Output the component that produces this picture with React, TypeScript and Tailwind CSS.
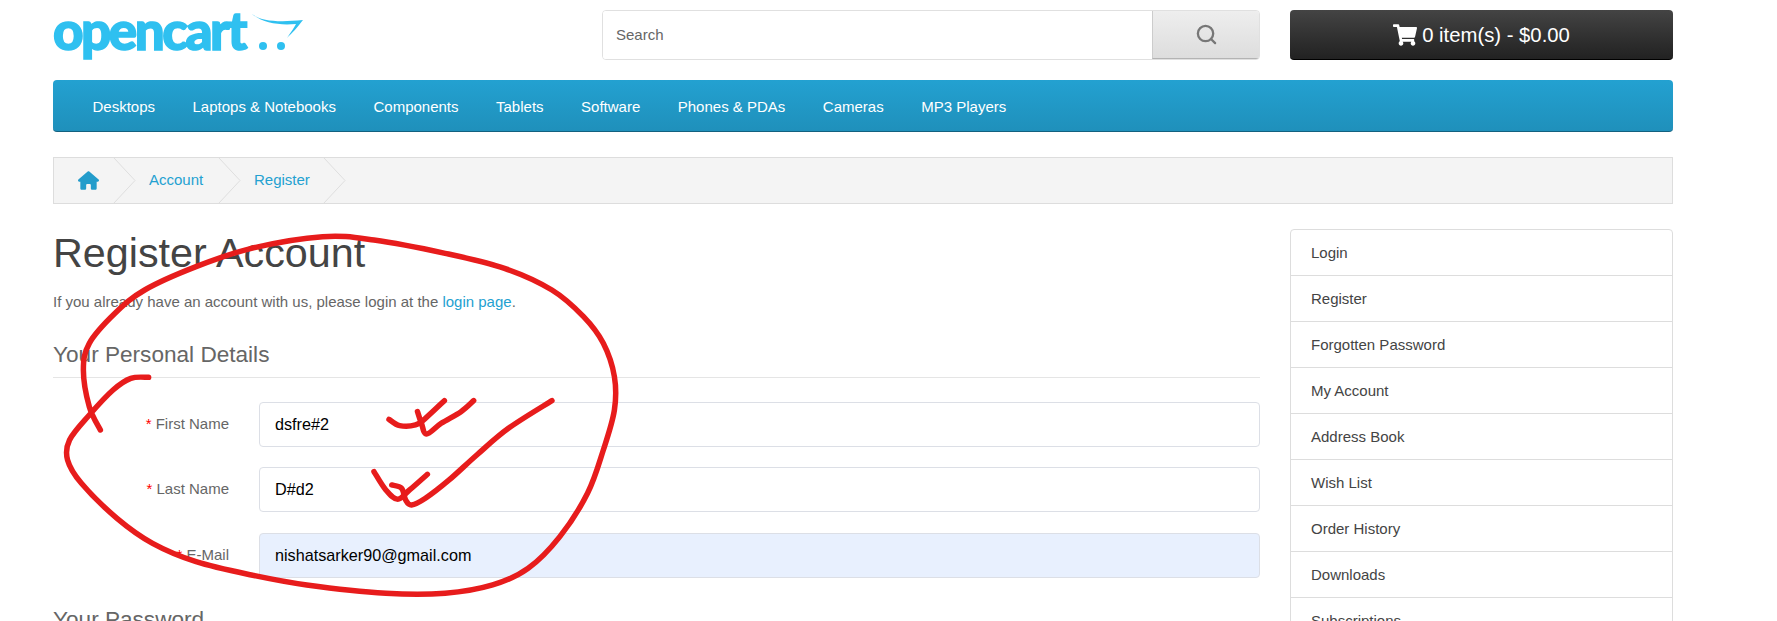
import React from 'react';
import { Search } from 'lucide-react';
import { FaShoppingCart } from 'react-icons/fa';
import { FaHouse } from 'react-icons/fa6';

const navItems = ['Desktops', 'Laptops & Notebooks', 'Components', 'Tablets', 'Software', 'Phones & PDAs', 'Cameras', 'MP3 Players'];
const sideItems = ['Login', 'Register', 'Forgotten Password', 'My Account', 'Address Book', 'Wish List', 'Order History', 'Downloads', 'Subscriptions'];

type Pt = [number, number];

// smooth line through hand-picked points (catmull-rom to bezier)
const smooth = (p: Pt[]) => {
  let d = `M${p[0][0]} ${p[0][1]}`;
  for (let i = 0; i < p.length - 1; i++) {
    const a = p[Math.max(i - 1, 0)];
    const b = p[i];
    const c = p[i + 1];
    const e = p[Math.min(i + 2, p.length - 1)];
    d += ` C${b[0] + (c[0] - a[0]) / 6} ${b[1] + (c[1] - a[1]) / 6} ${c[0] - (e[0] - b[0]) / 6} ${c[1] - (e[1] - b[1]) / 6} ${c[0]} ${c[1]}`;
  }
  return d;
};

const scribbles: Pt[][] = [
  [[178, 660], [150, 590], [135, 480], [150, 400], [215, 310], [290, 240], [420, 170], [560, 115], [740, 80], [870, 90], [1050, 130], [1200, 175], [1320, 240], [1400, 320], [1450, 400], [1478, 500], [1478, 600], [1450, 720], [1410, 850], [1340, 980], [1260, 1075], [1170, 1125], [1050, 1150], [900, 1150], [700, 1125], [560, 1095], [420, 1055], [310, 1000], [220, 925], [130, 820], [95, 750], [100, 690], [150, 615], [210, 540], [255, 505], [300, 502]],
  [[908, 628], [935, 647], [975, 645], [1000, 625], [1048, 572]],
  [[980, 605], [990, 640], [1003, 672], [1040, 640], [1090, 605], [1122, 572]],
  [[870, 785], [900, 840], [930, 868], [960, 840], [1005, 793]],
  [[915, 825], [940, 835], [950, 870], [965, 885], [1000, 865], [1060, 810], [1130, 735], [1210, 655], [1320, 572]],
];

const Logo = () => (
  <div className="relative w-[260px] h-[62px]">
    <span className="absolute left-0 top-[-5px] font-['Lato',sans-serif] font-black text-[53px] leading-[50px] tracking-[-2.5px] text-[#2fc0f0] [-webkit-text-stroke:1.5px_#2fc0f0]">opencart</span>
    <svg className="absolute left-[190px] top-0" width="75" height="50" viewBox="0 0 75 50">
      <path d="M7 2 C14 10 30 13 60 10 C54 18 49 23 44 28 C48 22 51 18 53 14 C35 16 16 12 7 2Z" fill="#2fc0f0" />
      <circle cx="20" cy="36" r="4" fill="#2fc0f0" />
      <circle cx="38" cy="36" r="4" fill="#2fc0f0" />
    </svg>
  </div>
);

const Field = ({ label, value, autofill }: { label: string; value: string; autofill?: boolean }) => (
  <div className="flex items-center h-[45px] mb-[20.5px]">
    <label className="w-[176px] text-right text-[15px] text-[#666]">
      <span className="text-[#f00]">* </span>
      {label}
    </label>
    <div
      className={`ml-[30px] flex-1 h-full flex items-center px-[15px] rounded-[4px] border border-[#dcdfe6] text-[16.2px] text-black ${autofill ? 'bg-[#e8f0fe]' : 'bg-white'}`}
    >
      {value}
    </div>
  </div>
);

export default function App() {
  return (
    <div className="relative h-[621px] overflow-hidden bg-white font-['Liberation_Sans',Arial,sans-serif]">
      <div className="w-[1620px] ml-[53px]">
        {/* header */}
        <header className="flex items-start pt-[10px] h-[80px]">
          <Logo />
          <div className="ml-[289px] flex w-[658px] h-[50px] rounded-[4px] border border-[#e0e0e0] overflow-hidden">
            <div className="flex-1 flex items-center px-[13px] pt-[1px] text-[15px] text-[#666] bg-white">Search</div>
            <div className="w-[107px] flex items-center justify-center border-l border-[#ccc] border-b-[#b3b3b3] border-b bg-linear-to-b from-[#eeeeee] to-[#dddddd] text-[#777]">
              <Search size={23} strokeWidth={2.4} />
            </div>
          </div>
          <div className="ml-[30px] w-[383px] h-[50px] flex items-center justify-center gap-[5px] rounded-[4px] border-b border-black bg-linear-to-b from-[#444444] to-[#222222] text-white text-[20.3px]">
            <FaShoppingCart size={24} />
            <span className="pt-[1px]">0 item(s) - $0.00</span>
          </div>
        </header>

        {/* nav */}
        <nav className="h-[52px] flex items-center gap-[37.5px] pl-[39.5px] pt-[4px] rounded-[4px] border-b border-[#13617f] bg-linear-to-b from-[#23a1d1] to-[#1f90bb] text-white text-[15px]">
          {navItems.map((item) => (
            <span key={item}>{item}</span>
          ))}
        </nav>

        {/* breadcrumb */}
        <div className="mt-[25px] h-[47px] flex items-stretch border border-[#ddd] bg-[#f4f4f4] text-[15px] text-[#23a1d1] overflow-hidden">
          {[null, 'Account', 'Register'].map((crumb, i) => (
            <div key={i} className={`relative flex items-center ${i === 0 ? 'w-[83px] pl-[24px]' : 'w-[105px] pl-[12px]'}`}>
              {crumb ?? <FaHouse size={21} className="text-[#239ccb]" />}
              <svg className="absolute right-0 top-0" width="24" height="45" viewBox="0 0 24 45">
                <path d="M1 0 L22 22.5 L1 45" fill="none" stroke="#dedede" />
              </svg>
            </div>
          ))}
        </div>

        {/* main */}
        <div className="flex gap-[30px] mt-[25px]">
          <main className="w-[1207px]">
            <h1 className="mt-[1px] text-[41.3px] leading-[46px] text-[#444]">Register Account</h1>
            <p className="mt-[16px] text-[15px] leading-[20px] text-[#666]">
              If you already have an account with us, please login at the <span className="text-[#23a1d1]">login page</span>.
            </p>
            <h2 className="mt-[29.5px] pb-[9px] border-b border-[#e5e5e5] text-[22.6px] leading-[26px] text-[#666]">Your Personal Details</h2>
            <div className="mt-[24px]">
              <Field label="First Name" value="dsfre#2" />
              <Field label="Last Name" value="D#d2" />
              <Field label="E-Mail" value="nishatsarker90@gmail.com" autofill />
            </div>
            <h2 className="mt-[29px] text-[22.6px] leading-[26px] text-[#666]">Your Password</h2>
          </main>
          <aside className="w-[383px] rounded-[4px] border border-[#ddd] text-[15px] text-[#444]">
            {sideItems.map((item, i) => (
              <div key={item} className={`flex items-center px-[20px] pt-[1px] ${i > 0 ? 'h-[46px] border-t border-[#ddd]' : 'h-[45px]'}`}>
                {item}
              </div>
            ))}
          </aside>
        </div>
      </div>

      {/* red pen marks on top of the screenshot */}
      <svg className="absolute inset-0 pointer-events-none" width="1777" height="621" viewBox="0 0 1777 621">
        <g transform="translate(30 210) scale(0.3954 0.3333)">
          {scribbles.map((pts, i) => (
            <path key={i} d={smooth(pts)} fill="none" stroke="#e71c1c" strokeWidth="5.5" strokeLinecap="round" strokeLinejoin="round" vectorEffect="non-scaling-stroke" />
          ))}
        </g>
      </svg>
    </div>
  );
}
